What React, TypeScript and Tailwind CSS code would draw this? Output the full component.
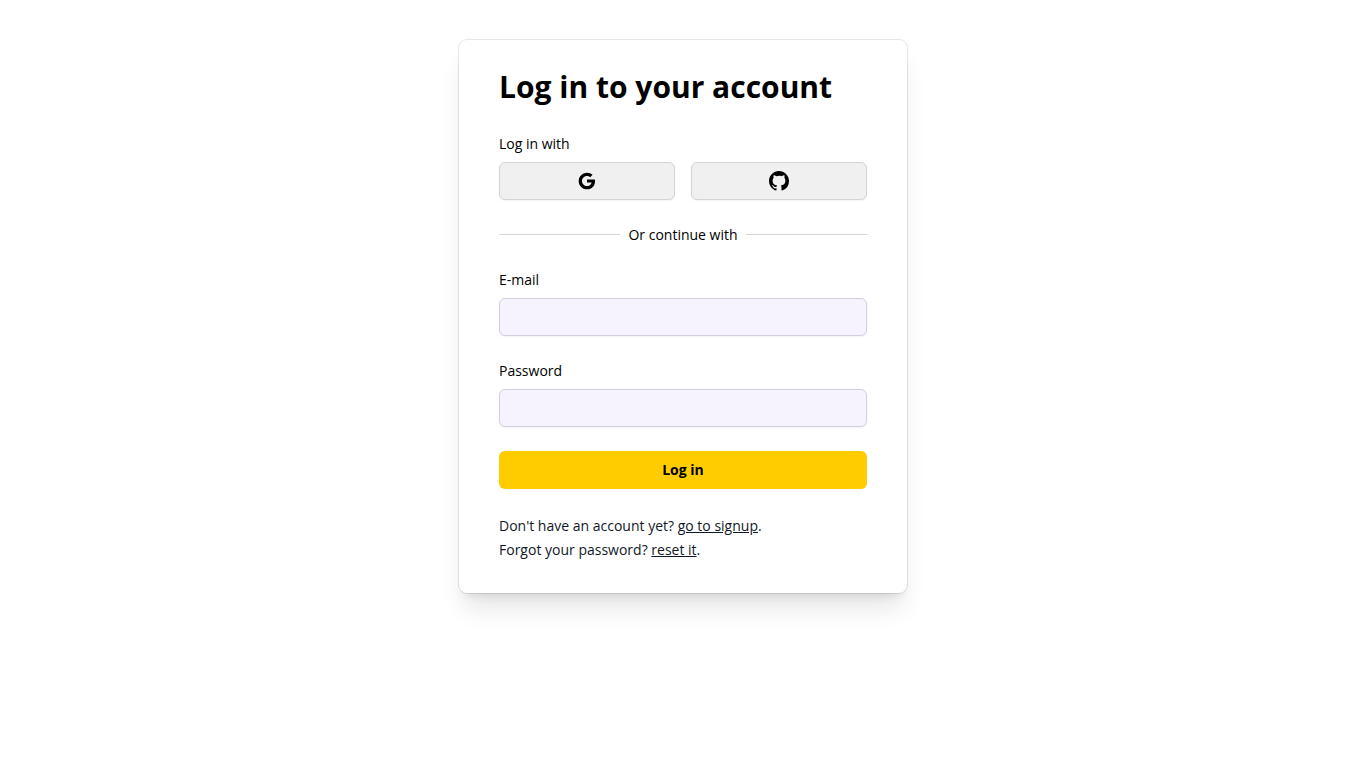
import { useState, FormEvent, ReactNode } from "react";

function GoogleIcon() {
  return (
    <svg className="h-5 w-5" viewBox="0 0 24 24" fill="currentColor" aria-hidden="true">
      <path d="M11.99,13.9 L11.99,10.18 L21.36,10.18 C21.5,10.81 21.61,11.4 21.61,12.23 C21.61,17.95 17.77,22 12,22 C6.48,22 2,17.52 2,12 C2,6.48 6.48,2 12,2 C14.7,2 16.96,2.99 18.69,4.61 L15.85,7.37 C15.13,6.69 13.87,5.89 12,5.89 C8.69,5.89 5.99,8.64 5.99,12.01 C5.99,15.38 8.69,18.13 12,18.13 C15.83,18.13 17.24,15.48 17.5,13.91 L11.99,13.91 L11.99,13.9 Z" />
    </svg>
  );
}

function GitHubIcon() {
  return (
    <svg className="h-5 w-5" viewBox="0 0 20 20" fill="currentColor" aria-hidden="true">
      <path
        fillRule="evenodd"
        clipRule="evenodd"
        d="M10 0C4.477 0 0 4.484 0 10.017c0 4.425 2.865 8.18 6.839 9.504.5.092.682-.217.682-.483 0-.237-.008-.868-.013-1.703-2.782.605-3.369-1.343-3.369-1.343-.454-1.158-1.11-1.466-1.11-1.466-.908-.62.069-.608.069-.608 1.003.07 1.531 1.032 1.531 1.032.892 1.53 2.341 1.088 2.91.832.092-.647.35-1.088.636-1.338-2.22-.253-4.555-1.113-4.555-4.951 0-1.093.39-1.988 1.029-2.688-.103-.253-.446-1.272.098-2.65 0 0 .84-.27 2.75 1.026A9.564 9.564 0 0110 4.844c.85.004 1.705.115 2.504.337 1.909-1.296 2.747-1.027 2.747-1.027.546 1.379.203 2.398.1 2.651.64.7 1.028 1.595 1.028 2.688 0 3.848-2.339 4.695-4.566 4.942.359.31.678.921.678 1.856 0 1.338-.012 2.419-.012 2.747 0 .268.18.58.688.482A10.019 10.019 0 0020 10.017C20 4.484 15.522 0 10 0z"
      />
    </svg>
  );
}

function SocialButton({ label, children }: { label: string; children: ReactNode }) {
  return (
    <button
      type="button"
      aria-label={label}
      className="flex h-[38px] flex-1 cursor-pointer items-center justify-center rounded-md border border-neutral-300 bg-[#f0f0f0] shadow-xs"
    >
      {children}
    </button>
  );
}

type FieldProps = {
  id: string;
  label: string;
  type: string;
  value: string;
  onChange: (value: string) => void;
};

function Field({ id, label, type, value, onChange }: FieldProps) {
  return (
    <div className="flex flex-col gap-2">
      <label htmlFor={id}>{label}</label>
      <input
        id={id}
        type={type}
        value={value}
        onChange={(e) => onChange(e.target.value)}
        className="h-[38px] w-full rounded-md border border-[#d2d0de] bg-[#f6f3ff] px-3 shadow-xs"
      />
    </div>
  );
}

export default function App() {
  const [email, setEmail] = useState("");
  const [password, setPassword] = useState("");

  const handleSubmit = (e: FormEvent) => {
    e.preventDefault();
  };

  return (
    <main className="min-h-screen bg-white px-4 pt-10 font-['Open_Sans',sans-serif] text-sm leading-[21px] text-black">
      <div className="mx-auto w-full max-w-md rounded-lg bg-white px-10 py-8 shadow-xl ring-1 ring-gray-900/10">
        <h1 className="text-3xl leading-none font-bold">Log in to your account</h1>

        <div className="mt-8 flex flex-col gap-2">
          <p className="leading-5">Log in with</p>
          <div className="flex gap-4">
            <SocialButton label="Log in with Google">
              <GoogleIcon />
            </SocialButton>
            <SocialButton label="Log in with GitHub">
              <GitHubIcon />
            </SocialButton>
          </div>
        </div>

        <div className="my-6 flex items-center gap-2">
          <div className="h-px flex-1 bg-neutral-300" />
          <span>Or continue with</span>
          <div className="h-px flex-1 bg-neutral-300" />
        </div>

        <form onSubmit={handleSubmit} className="flex flex-col gap-6">
          <Field id="email" label="E-mail" type="email" value={email} onChange={setEmail} />
          <Field id="password" label="Password" type="password" value={password} onChange={setPassword} />
          <button
            type="submit"
            className="h-[38px] w-full cursor-pointer rounded-md bg-[#ffcc00] leading-5 font-bold"
          >
            Log in
          </button>
        </form>

        <div className="mt-6 text-base text-[#111827]">
          <p>
            <span className="text-sm">
              Don't have an account yet? <a href="#signup" className="underline">go to signup</a>.
            </span>
          </p>
          <p>
            <span className="text-sm">
              Forgot your password? <a href="#reset" className="underline">reset it</a>.
            </span>
          </p>
        </div>
      </div>
    </main>
  );
}
